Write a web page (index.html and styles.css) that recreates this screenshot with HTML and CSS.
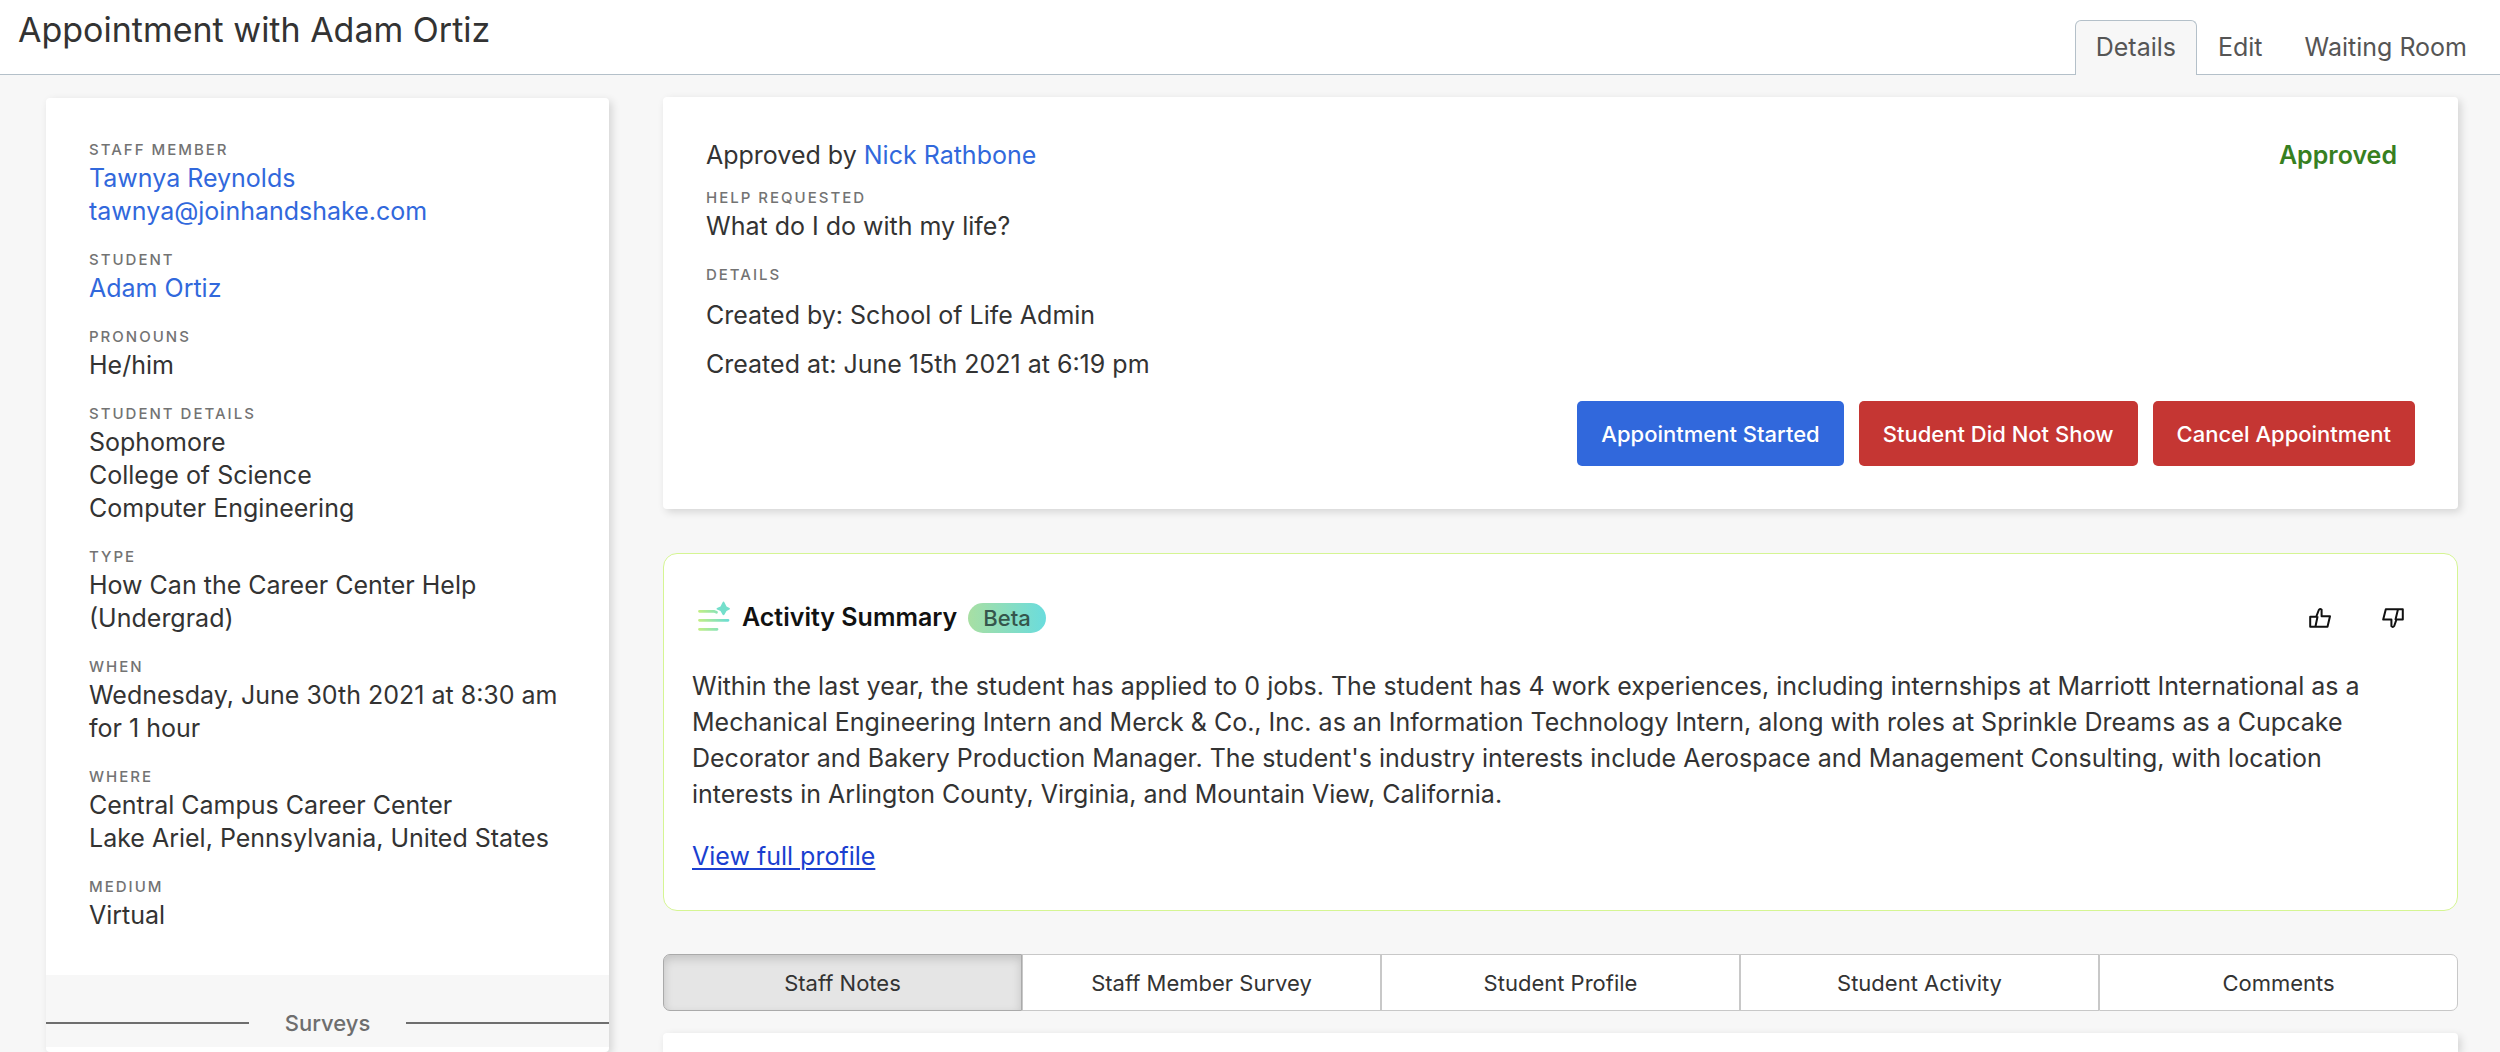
FILE: index.html
```html
<!DOCTYPE html>
<html lang="en">
<head>
    <meta charset="UTF-8">
    <meta name="viewport" content="width=device-width, initial-scale=1.0">
    <title>Appointment with Adam Ortiz</title>
    <link rel="stylesheet" href="styles.css">
</head>
<body>

<header class="page-header">
    <h1>Appointment with Adam Ortiz</h1>
    <nav class="page-tabs">
        <a href="#details" class="active">Details</a>
        <a href="#edit">Edit</a>
        <a href="#waiting-room">Waiting Room</a>
    </nav>
</header>

<div class="layout">
    <aside class="card sidebar">
        <dl class="info">
            <div class="info-group">
                <dt>Staff Member</dt>
                <dd><a href="#staff">Tawnya Reynolds</a></dd>
                <dd><a href="mailto:tawnya@joinhandshake.com">tawnya@joinhandshake.com</a></dd>
            </div>
            <div class="info-group">
                <dt>Student</dt>
                <dd><a href="#student">Adam Ortiz</a></dd>
            </div>
            <div class="info-group">
                <dt>Pronouns</dt>
                <dd>He/him</dd>
            </div>
            <div class="info-group">
                <dt>Student Details</dt>
                <dd>Sophomore</dd>
                <dd>College of Science</dd>
                <dd>Computer Engineering</dd>
            </div>
            <div class="info-group">
                <dt>Type</dt>
                <dd>How Can the Career Center Help (Undergrad)</dd>
            </div>
            <div class="info-group">
                <dt>When</dt>
                <dd>Wednesday, June 30th 2021 at 8:30 am<br>for 1 hour</dd>
            </div>
            <div class="info-group">
                <dt>Where</dt>
                <dd>Central Campus Career Center</dd>
                <dd>Lake Ariel, Pennsylvania, United States</dd>
            </div>
            <div class="info-group">
                <dt>Medium</dt>
                <dd>Virtual</dd>
            </div>
        </dl>
        <h2 class="divider">Surveys</h2>
    </aside>

    <main class="content">
        <section class="card status-card">
            <div class="status-row">
                <p>Approved by <a href="#nick">Nick Rathbone</a></p>
                <strong class="status">Approved</strong>
            </div>
            <h3 class="label">Help Requested</h3>
            <p>What do I do with my life?</p>
            <h3 class="label label-details">Details</h3>
            <p class="detail">Created by: School of Life Admin</p>
            <p class="detail">Created at: June 15th 2021 at 6:19 pm</p>
            <div class="actions">
                <button type="button" class="btn btn-primary">Appointment Started</button>
                <button type="button" class="btn btn-danger">Student Did Not Show</button>
                <button type="button" class="btn btn-danger">Cancel Appointment</button>
            </div>
        </section>

        <section class="summary">
            <div class="summary-header">
                <svg class="summary-icon" viewBox="0 0 32 30" aria-hidden="true">
                    <defs>
                        <linearGradient id="fade" gradientUnits="userSpaceOnUse" x1="0" y1="0" x2="32" y2="0">
                            <stop offset="0" stop-color="#c3ee82"/>
                            <stop offset="1" stop-color="#66dcd8"/>
                        </linearGradient>
                    </defs>
                    <path d="M1.5 10.3H16L18.5 11.3M1.5 19.3H30M1.5 28.3H19" fill="none" stroke="url(#fade)" stroke-width="2.8" stroke-linecap="round"/>
                    <path d="M25.500 .5Q26 .5 26.500 1.500L28.500 5.500L31.500 7Q32.500 7.800 31.500 8.500L28.500 10L26.500 13.500Q25.500 15 24.500 13.500L22.500 10L19 8.500Q18 7.800 19 7L22.500 5.500L24.500 1.500Q25 .5 25.500 .5Z" fill="#74dfcb"/>
                </svg>
                <h2>Activity Summary</h2>
                <span class="badge">Beta</span>
                <div class="feedback">
                    <button type="button" aria-label="Helpful">
                        <svg viewBox="0 0 22 20">
                            <path d="M1.200 8.800H7.200L9.800 2Q11 .2 12.600 1.800V8.200H21L18.500 18.800H1.200ZM8.600 8.200L6.400 18.800"/>
                        </svg>
                    </button>
                    <button type="button" aria-label="Not helpful">
                        <svg viewBox="0 0 22 20">
                            <path d="M20.800 1.200H3.800L1.200 11.600H9.400V18.200Q10.800 19.800 12.200 18L14.400 11.600H20.800ZM16 1.200L13.400 12"/>
                        </svg>
                    </button>
                </div>
            </div>
            <p>Within the last year, the student has applied to 0 jobs. The student has 4 work experiences, including internships at Marriott International as a Mechanical Engineering Intern and Merck &amp; Co., Inc. as an Information Technology Intern, along with roles at Sprinkle Dreams as a Cupcake Decorator and Bakery Production Manager. The student's industry interests include Aerospace and Management Consulting, with location interests in Arlington County, Virginia, and Mountain View, California.</p>
            <a href="#profile" class="profile-link">View full profile</a>
        </section>

        <div class="segments">
            <button type="button" class="active">Staff Notes</button>
            <button type="button">Staff Member Survey</button>
            <button type="button">Student Profile</button>
            <button type="button">Student Activity</button>
            <button type="button">Comments</button>
        </div>

        <section class="card notes"></section>
    </main>
</div>

</body>
</html>
```
FILE: styles.css
```css
* {
    box-sizing: border-box;
}
body {
    margin: 0;
    min-height: 100vh;
    display: flex;
    flex-direction: column;
    font-family: Inter, "Liberation Sans", Arial, sans-serif;
    font-size: 25px;
    line-height: 33px;
    color: #333;
    background-color: #f7f7f7;
}
h1, h2, h3, p, dl, dd {
    margin: 0;
}
a {
    color: #3168dc;
    text-decoration: none;
}
button {
    font-family: inherit;
    cursor: pointer;
}

/* header */
.page-header {
    display: flex;
    justify-content: space-between;
    height: 75px;
    padding: 0 12px 0 18px;
    background-color: #fff;
    border-bottom: 1px solid #b4c0c9;
}
.page-header h1 {
    padding-top: 10px;
    font-size: 34px;
    font-weight: 400;
    line-height: 40px;
}
.page-tabs {
    display: flex;
    align-self: flex-end;
    margin-bottom: -1px;
}
.page-tabs a {
    height: 55px;
    padding: 10px 20px;
    border: 1px solid transparent;
    border-bottom: none;
    border-radius: 6px 6px 0 0;
    color: #555;
}
.page-tabs .active {
    background-color: #f7f7f7;
    border-color: #b4c0c9;
}

/* two column layout */
.layout {
    flex: 1;
    display: grid;
    grid-template-columns: minmax(0, 563fr) minmax(0, 1795fr);
    gap: 54px;
    padding: 22px 42px 0 46px;
}
.card {
    background-color: #fff;
    border-radius: 4px;
    box-shadow: 3px 3px 8px rgba(0, 0, 0, 0.14);
}

/* sidebar */
.sidebar {
    margin-top: 1px;
}
.info {
    padding: 40px 40px 43px 43px;
}
.info-group {
    margin-bottom: 20px;
}
.info-group:last-child {
    margin-bottom: 0;
}
.info dt,
.label {
    font-size: 15px;
    font-weight: 500;
    line-height: 24px;
    letter-spacing: 2px;
    text-transform: uppercase;
    color: #737373;
}
.divider {
    display: flex;
    align-items: center;
    gap: 36px;
    height: 72px;
    padding-top: 24px;
    background-color: #f7f7f7;
    color: #6e6e6e;
    font-size: 22px;
    font-weight: 500;
}
.divider::before,
.divider::after {
    content: "";
    flex: 1;
    height: 2px;
    background-color: #6e6e6e;
}

/* main column */
.content {
    display: flex;
    flex-direction: column;
}
.status-card {
    padding: 42px 43px 43px;
}
.status-row {
    display: flex;
    justify-content: space-between;
    margin-bottom: 14px;
}
.status {
    margin-right: 18px;
    font-weight: 600;
    color: #37801f;
}
.label-details {
    margin-top: 20px;
}
.detail {
    margin: 12px 0 16px;
}
.actions {
    display: flex;
    justify-content: flex-end;
    gap: 15px;
    margin-top: 20px;
}
.btn {
    height: 65px;
    padding: 0 24px;
    border: none;
    border-radius: 5px;
    color: #fff;
    font-size: 22px;
    font-weight: 500;
}
.btn-primary {
    background-color: #3168dc;
}
.btn-danger {
    background-color: #c53633;
}

/* activity summary */
.summary {
    margin-top: 44px;
    padding: 47px 50px 37px 28px;
    background-color: #fff;
    border: 1px solid #d5f593;
    border-radius: 14px;
}
.summary-header {
    display: flex;
    align-items: center;
    margin-bottom: 34px;
}
.summary-icon {
    width: 32px;
    height: 30px;
    margin: 0 12px 3px 6px;
}
.summary h2 {
    font-size: 25px;
    font-weight: 600;
    color: #111;
}
.badge {
    margin-left: 11px;
    padding: 0 15px;
    border-radius: 15px;
    background: linear-gradient(to right, #a8dfa3, #6adcdd);
    color: #35564c;
    font-size: 22px;
    font-weight: 500;
    line-height: 30px;
}
.feedback {
    display: flex;
    gap: 51px;
    margin-left: auto;
    margin-right: 3px;
}
.feedback button {
    display: flex;
    padding: 0;
    border: none;
    background: none;
}
.feedback svg {
    width: 22px;
    height: 20px;
    fill: none;
    stroke: #111;
    stroke-width: 2;
    stroke-linejoin: round;
}
.summary p {
    line-height: 36px;
}
.profile-link {
    display: inline-block;
    margin-top: 28px;
    color: #1a3fd0;
    text-decoration: underline;
    text-decoration-thickness: 2px;
    text-underline-offset: 3px;
}

/* segmented tabs */
.segments {
    display: flex;
    margin: 43px 0 22px;
}
.segments button {
    flex: 1 1 0;
    height: 57px;
    border: 1px solid #c8c8c8;
    background-color: #fff;
    color: #333;
    font-size: 22px;
}
.segments button:first-child {
    border-radius: 7px 0 0 7px;
}
.segments button:last-child {
    border-radius: 0 7px 7px 0;
}
.segments .active {
    background-color: #e5e5e5;
    border-color: #aaa;
    box-shadow: inset 0 4px 10px rgba(0, 0, 0, 0.15);
}
.notes {
    flex: 1;
    border-radius: 4px 4px 0 0;
}
```
